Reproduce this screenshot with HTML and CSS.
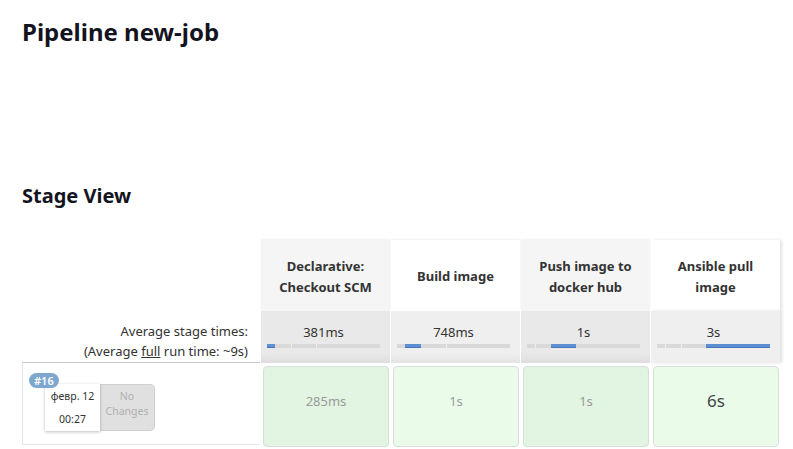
FILE: index.html
```html
<!DOCTYPE html>
<html lang="ru">
<head>
<meta charset="utf-8">
<title>Pipeline new-job</title>
<link rel="stylesheet" href="styles.css">
</head>
<body>
<div class="page">
  <h1 class="title">Pipeline new-job</h1>
  <h2 class="section-title">Stage View</h2>
  <div class="stage-view">
    <div class="head-left"></div>
    <div class="stage-head odd">Declarative:<br>Checkout SCM</div>
    <div class="stage-head even">Build image</div>
    <div class="stage-head odd">Push image to<br>docker hub</div>
    <div class="stage-head even">Ansible pull<br>image</div>

    <div class="avg-left">
      <div>Average stage times:</div>
      <div>(Average <u>full</u> run time: ~9s)</div>
    </div>
    <div class="avg odd">
      <div class="avg-time">381ms</div>
      <div class="bar"><span class="seg active" style="width:7.1%"></span><span class="seg" style="width:14.2%"></span><span class="seg sep" style="width:22.1%"></span><span class="seg sep" style="width:56.6%"></span></div>
    </div>
    <div class="avg even">
      <div class="avg-time">748ms</div>
      <div class="bar"><span class="seg" style="width:7.1%"></span><span class="seg active" style="width:14.2%"></span><span class="seg" style="width:22.1%"></span><span class="seg sep" style="width:56.6%"></span></div>
    </div>
    <div class="avg odd">
      <div class="avg-time">1s</div>
      <div class="bar"><span class="seg" style="width:7.1%"></span><span class="seg sep" style="width:14.2%"></span><span class="seg active" style="width:22.1%"></span><span class="seg" style="width:56.6%"></span></div>
    </div>
    <div class="avg even">
      <div class="avg-time">3s</div>
      <div class="bar"><span class="seg" style="width:7.1%"></span><span class="seg sep" style="width:14.2%"></span><span class="seg sep" style="width:22.1%"></span><span class="seg active" style="width:56.6%"></span></div>
    </div>

    <div class="run-left">
      <span class="badge">#16</span>
      <div class="run-info">
        <div class="run-date">
          <div>февр. 12</div>
          <div>00:27</div>
        </div>
        <div class="run-changes">No<br>Changes</div>
      </div>
    </div>
    <div class="run odd"><div class="cell">285ms</div></div>
    <div class="run even"><div class="cell">1s</div></div>
    <div class="run odd"><div class="cell">1s</div></div>
    <div class="run even"><div class="cell big">6s</div></div>
  </div>
</div>
</body>
</html>
```

FILE: styles.css
```css
html, body {
  margin: 0;
  padding: 0;
  background: #ffffff;
}

body {
  font-family: "Noto Sans", "Open Sans", sans-serif;
  color: #333333;
}

.page {
  padding: 0 12px 0 22px;
}

.title {
  margin: 0;
  padding-top: 16px;
  font-size: 24px;
  line-height: 32px;
  font-weight: 700;
  color: #14141f;
}

.section-title {
  margin: 0;
  padding-top: 134px;
  font-size: 20px;
  line-height: 28px;
  font-weight: 700;
  color: #14141f;
}

.stage-view {
  margin-top: 30px;
  display: grid;
  grid-template-columns: 238px repeat(4, 129px);
  grid-template-rows: 71px 52px 86px;
  column-gap: 1px;
  font-size: 13px;
}

.stage-head {
  display: flex;
  align-items: center;
  justify-content: center;
  text-align: center;
  font-weight: 700;
  line-height: 21px;
  padding-top: 2px;
  color: #333333;
  box-shadow: 0 -1px 2px rgba(0, 0, 0, 0.06);
}

.stage-head.odd { background: #f5f5f5; }
.stage-head.even { background: #ffffff; }

.stage-head:nth-child(5),
.avg:nth-child(10) {
  box-shadow: 2px 0 3px rgba(0, 0, 0, 0.12);
}

.avg-left {
  text-align: right;
  padding: 10px 12px 0 0;
  line-height: 20px;
  color: #333333;
  border-bottom: 1px solid #c8c8c8;
}

.avg {
  display: flex;
  flex-direction: column;
  align-items: stretch;
  padding: 11px 10px 0 6px;
  box-shadow: inset 0 -10px 8px -6px rgba(0, 0, 0, 0.06);
}

.avg.odd { background: #e9e9e9; }
.avg.even { background: #efefef; }

.avg-time {
  text-align: center;
  line-height: 20px;
  color: #333333;
}

.bar {
  margin-top: 2px;
  height: 4px;
  display: flex;
  background: #d9d9d9;
}

.seg {
  height: 4px;
  background: #d9d9d9;
  box-sizing: border-box;
}

.seg.sep {
  border-left: 1px solid #ededed;
}

.seg.active {
  background: #5b8ed2;
  border-bottom: 1px solid #4876b8;
}

.run-left {
  position: relative;
  border-left: 1px solid #e6e6e6;
  border-bottom: 1px solid #e6e6e6;
  height: 82px;
  padding: 21px 0 0 22px;
  box-sizing: border-box;
}

.badge {
  position: absolute;
  left: 6px;
  top: 10px;
  z-index: 2;
  padding: 0 5px;
  height: 15px;
  line-height: 15px;
  border-radius: 8px;
  background: #7ea7cf;
  color: #ffffff;
  font-size: 11px;
  font-weight: 600;
}

.run-info {
  display: flex;
  font-size: 10.5px;
}

.run-date {
  width: 55px;
  height: 47px;
  background: #ffffff;
  box-shadow: 0 1px 3px rgba(0, 0, 0, 0.25);
  display: flex;
  flex-direction: column;
  justify-content: center;
  align-items: center;
  gap: 4px;
  line-height: 19px;
  color: #333333;
  position: relative;
  z-index: 1;
}

.run-changes {
  width: 55px;
  height: 47px;
  box-sizing: border-box;
  background: #e0e0e0;
  border: 1px solid #cfcfcf;
  border-left: none;
  border-radius: 0 5px 5px 0;
  color: #b0b0b0;
  text-align: center;
  line-height: 15px;
  padding-top: 4px;
}

.run {
  padding: 3px 1px 0 2px;
}

.cell {
  height: 81px;
  box-sizing: border-box;
  border: 1px solid #d8dfd8;
  border-radius: 4px;
  display: flex;
  justify-content: center;
  padding-top: 23px;
  line-height: 22px;
  color: #9a9a9a;
  font-size: 13px;
}

.run.odd .cell { background: #e2f4e2; }
.run.even .cell { background: #eafbea; }

.cell.big {
  font-size: 17px;
  color: #444444;
}
```
